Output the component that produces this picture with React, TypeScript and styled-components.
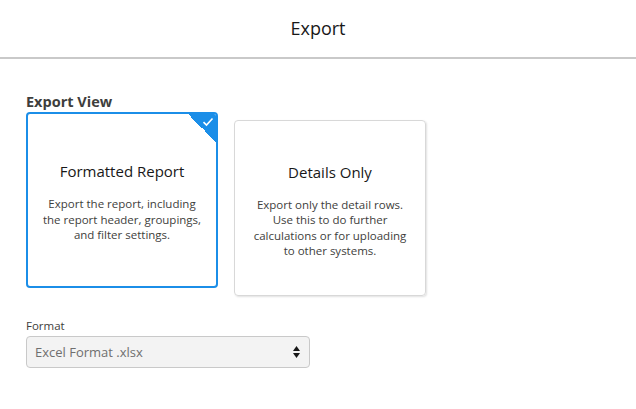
import React from "react";
import styled, { createGlobalStyle } from "styled-components";

const Global = createGlobalStyle`
  html, body { margin: 0; padding: 0; background: #fff; }
  body { font-family: "Open Sans", "Noto Sans", sans-serif; color: #181818; }
  * { box-sizing: border-box; }
`;

const Page = styled.div`
  width: 636px;
  height: 409px;
  background: #fff;
  display: flex;
  flex-direction: column;
`;

const Header = styled.header`
  height: 59px;
  border-bottom: 2px solid #c9c9c9;
  display: flex;
  align-items: center;
  justify-content: center;
`;

const Title = styled.h1`
  margin: 0;
  font-size: 18px;
  font-weight: 400;
  color: #181818;
  padding-bottom: 1px;
`;

const Body = styled.main`
  padding: 33px 26px 0 26px;
  display: flex;
  flex-direction: column;
`;

const SectionLabel = styled.div`
  font-size: 14.5px;
  font-weight: 700;
  color: #3e3e3c;
  line-height: 20px;
`;

const CardRow = styled.div`
  display: flex;
  align-items: flex-start;
  gap: 16px;
`;

const Card = styled.div<{ $selected?: boolean }>`
  position: relative;
  width: 192px;
  height: 176px;
  margin-top: ${(p) => (p.$selected ? "0" : "8px")};
  border-radius: 4px;
  border: ${(p) => (p.$selected ? "2px solid #1b8ee8" : "1px solid #d8d8d8")};
  box-shadow: ${(p) => (p.$selected ? "none" : "1px 1px 2px rgba(0,0,0,0.12)")};
  display: flex;
  flex-direction: column;
  align-items: center;
  justify-content: center;
  text-align: center;
  overflow: hidden;
  padding: 4px 12px 0 12px;
`;

const CardTitle = styled.div`
  font-size: 15px;
  color: #181818;
  line-height: 20px;
  margin-bottom: 15px;
`;

const CardText = styled.div`
  font-size: 11.5px;
  color: #3e3e3c;
  line-height: 15.5px;
`;

const Corner = styled.div`
  position: absolute;
  top: -1px;
  right: -1px;
  width: 30px;
  height: 30px;
  background: linear-gradient(45deg, transparent 50%, #1b8ee8 50%);
  display: flex;
  align-items: flex-start;
  justify-content: flex-end;
  padding: 4px 3px 0 0;
`;

const Field = styled.div`
  margin-top: 22px;
  display: flex;
  flex-direction: column;
  gap: 2px;
`;

const FieldLabel = styled.label`
  font-size: 11.5px;
  color: #3e3e3c;
  line-height: 16px;
`;

const Select = styled.div`
  width: 284px;
  height: 32px;
  border: 1px solid #c9c9c9;
  border-radius: 4px;
  background: #f3f3f3;
  display: flex;
  align-items: center;
  justify-content: space-between;
  padding: 0 9px 0 8px;
  font-size: 13px;
  color: #6f6f6f;
`;

const Arrows = styled.div`
  display: flex;
  flex-direction: column;
  gap: 2px;
`;

export default function App() {
  return (
    <>
      <Global />
      <Page>
        <Header>
          <Title>Export</Title>
        </Header>
        <Body>
          <SectionLabel>Export View</SectionLabel>
          <CardRow>
            <Card $selected>
              <Corner>
                <svg width="12" height="10" viewBox="0 0 12 10">
                  <path d="M1.5 5.2 L4.5 8 L10.5 1.5" fill="none" stroke="#fff" strokeWidth="1.6" />
                </svg>
              </Corner>
              <CardTitle>Formatted Report</CardTitle>
              <CardText>
                Export the report, including
                <br />
                the report header, groupings,
                <br />
                and filter settings.
              </CardText>
            </Card>
            <Card>
              <CardTitle>Details Only</CardTitle>
              <CardText>
                Export only the detail rows.
                <br />
                Use this to do further
                <br />
                calculations or for uploading
                <br />
                to other systems.
              </CardText>
            </Card>
          </CardRow>
          <Field>
            <FieldLabel>Format</FieldLabel>
            <Select>
              <span>Excel Format .xlsx</span>
              <Arrows>
                <svg width="7" height="5" viewBox="0 0 7 5">
                  <path d="M3.5 0 L7 5 L0 5 Z" fill="#181818" />
                </svg>
                <svg width="7" height="5" viewBox="0 0 7 5">
                  <path d="M0 0 L7 0 L3.5 5 Z" fill="#181818" />
                </svg>
              </Arrows>
            </Select>
          </Field>
        </Body>
      </Page>
    </>
  );
}
